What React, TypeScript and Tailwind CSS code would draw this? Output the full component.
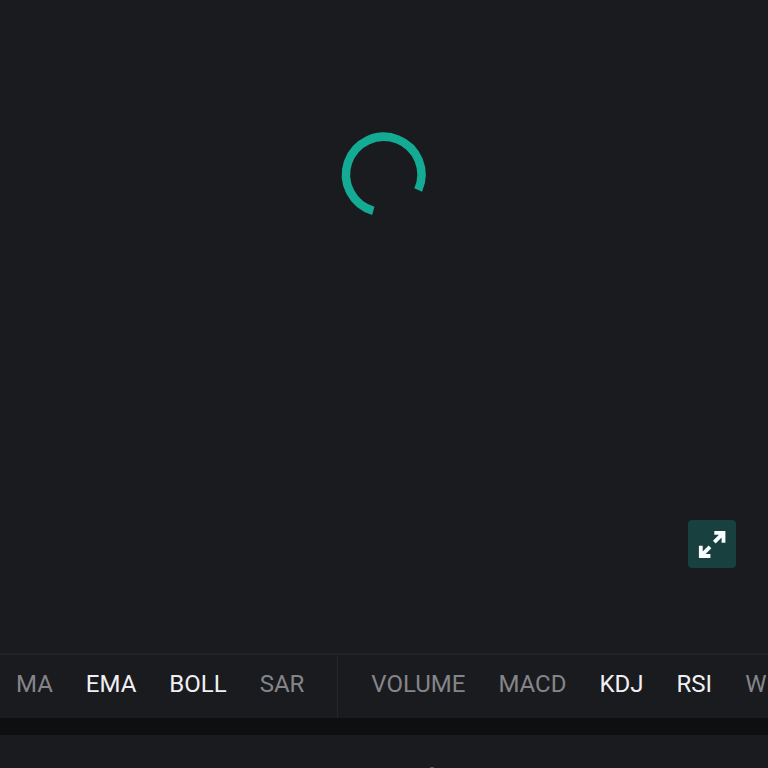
import { useState } from "react";
import clsx from "clsx";

const MAIN_INDICATORS = ["MA", "EMA", "BOLL", "SAR"];
const SUB_INDICATORS = ["VOLUME", "MACD", "KDJ", "RSI", "WR"];

interface IndicatorGroupProps {
  names: string[];
  active: string[];
  onToggle: (name: string) => void;
}

function IndicatorGroup({ names, active, onToggle }: IndicatorGroupProps) {
  return (
    <div className="flex shrink-0 items-center gap-[33px] pb-1.5">
      {names.map((name) => (
        <button
          key={name}
          type="button"
          aria-pressed={active.includes(name)}
          onClick={() => onToggle(name)}
          className={clsx(
            "shrink-0 text-2xl leading-8",
            active.includes(name) ? "text-[#f0f0f4]" : "text-[#858589]"
          )}
        >
          {name}
        </button>
      ))}
    </div>
  );
}

function Spinner() {
  return (
    <svg viewBox="-41.7 -42.5 84 84" className="h-[84px] w-[84px] overflow-visible" role="status" aria-label="Loading">
      <path
        d="M-10.4 36.3A37.75 37.75 0 1 1 34.5 15.4"
        fill="none"
        stroke="#14ab94"
        strokeWidth="8.5"
      />
    </svg>
  );
}

function ExpandIcon() {
  return (
    <svg viewBox="0 0 48 48" className="h-12 w-12" fill="none" stroke="#fbffff" strokeWidth="3.8">
      <path d="M26.3 12.9H35.5V22.8M35.3 13.2L26.3 22.2" />
      <path d="M12.8 25.8V36H22.4M13 35.8L22 26.8" />
    </svg>
  );
}

export default function App() {
  const [active, setActive] = useState(["EMA", "BOLL", "KDJ", "RSI"]);

  const toggle = (name: string) => {
    setActive((prev) =>
      prev.includes(name) ? prev.filter((n) => n !== name) : [...prev, name]
    );
  };

  return (
    <div className="flex h-screen flex-col overflow-hidden bg-[#1a1b1f] font-['Roboto',sans-serif]">
      <main className="relative flex flex-1 justify-center pt-[132px]">
        <Spinner />
        <button
          type="button"
          aria-label="Full screen"
          className="absolute right-8 bottom-[85px] rounded bg-[#17403f]"
        >
          <ExpandIcon />
        </button>
      </main>
      <nav className="flex h-[65px] gap-[33px] overflow-hidden border-t-2 border-[#212226] pl-4">
        <IndicatorGroup names={MAIN_INDICATORS} active={active} onToggle={toggle} />
        <div className="w-px shrink-0 bg-[#25262a]" />
        <IndicatorGroup names={SUB_INDICATORS} active={active} onToggle={toggle} />
      </nav>
      <div className="h-[17px] bg-[#0e0f11]" />
      <footer className="flex h-[33px] items-end justify-center pl-24">
        <span className="h-px w-1 bg-[#55565a]" />
      </footer>
    </div>
  );
}
